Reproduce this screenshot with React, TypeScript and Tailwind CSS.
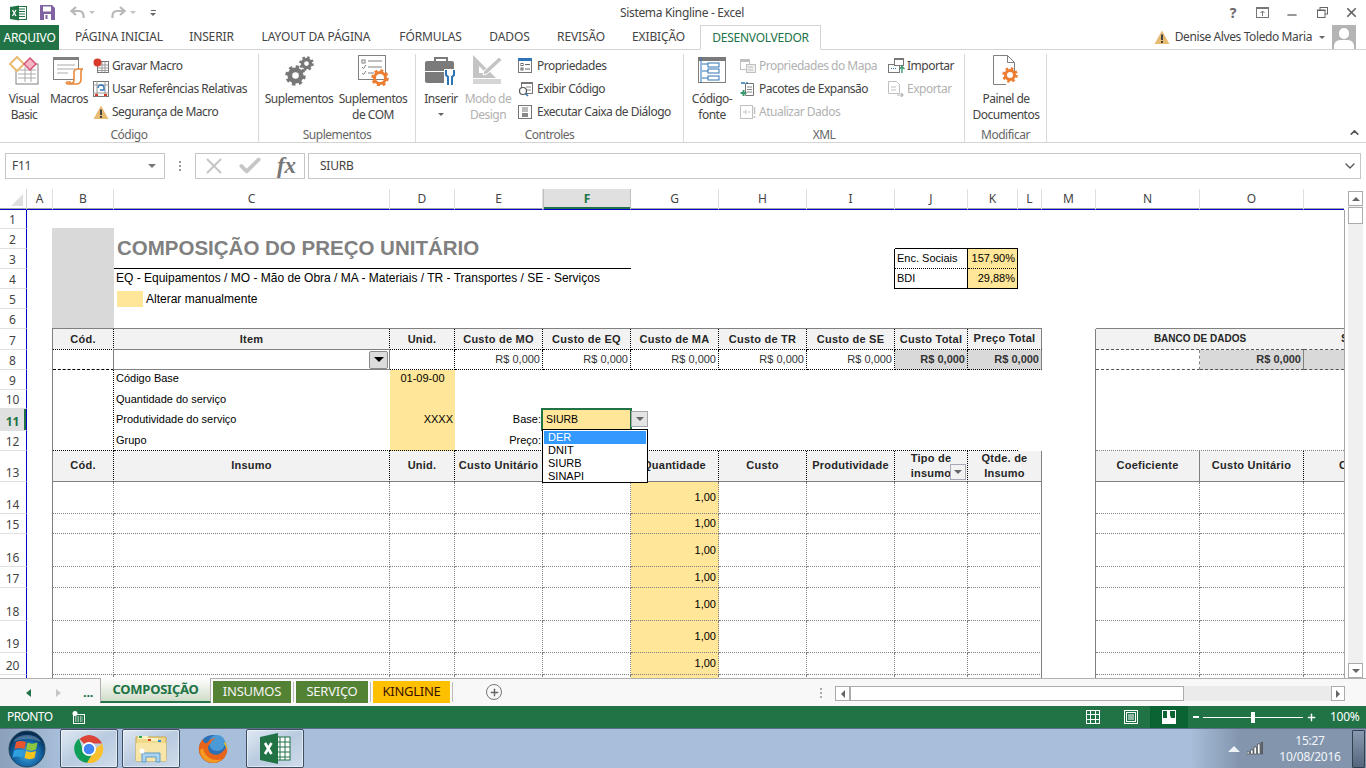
import React from 'react';
import { ChevronDown, ChevronUp, Minus, Plus, X, Check } from 'lucide-react';

const COL: Record<string, string> = { H0: 'col-start-1', A: 'col-start-2', B: 'col-start-3', C: 'col-start-4', D: 'col-start-5', E: 'col-start-6', F: 'col-start-7', G: 'col-start-8', H: 'col-start-9', I: 'col-start-10', J: 'col-start-11', K: 'col-start-12', L: 'col-start-13', M: 'col-start-14', N: 'col-start-15', O: 'col-start-16', P: 'col-start-17', Q: 'col-start-18' };
const ROW = ['row-start-1', 'row-start-2', 'row-start-3', 'row-start-4', 'row-start-5', 'row-start-6', 'row-start-7', 'row-start-8', 'row-start-9', 'row-start-10', 'row-start-11', 'row-start-12', 'row-start-13', 'row-start-14', 'row-start-15', 'row-start-16', 'row-start-17', 'row-start-18', 'row-start-19', 'row-start-20', 'row-start-21', 'row-start-22'];
const CS: Record<number, string> = { 1: '', 2: 'col-span-2', 3: 'col-span-3', 4: 'col-span-4', 6: 'col-span-6', 10: 'col-span-10' };
const RS: Record<number, string> = { 1: '', 2: 'row-span-2', 4: 'row-span-4', 5: 'row-span-5', 15: 'row-span-15', 21: 'row-span-21' };

function Cell({ c, r, cs = 1, rs = 1, className = '', children }: { c: string; r: number; cs?: number; rs?: number; className?: string; children?: React.ReactNode }) {
  return <div className={`${COL[c]} ${ROW[r]} ${CS[cs]} ${RS[rs]} min-w-0 min-h-0 ${className}`}>{children}</div>;
}

const HEAD = 'bg-[#f2f2f2] font-bold flex items-center justify-center text-center whitespace-nowrap text-[11px] tracking-[0.25px] text-[#262626] overflow-hidden';
const DOTK = 'border-r [border-right-style:dotted] border-r-black';
const DOTG = 'border-r [border-right-style:dotted] border-r-[#808080]';
const BDOTK = 'border-b [border-bottom-style:dotted] border-b-black';
const BDOTG = 'border-b [border-bottom-style:dotted] border-b-[#808080]';
const BDASH = 'border-b [border-bottom-style:dashed] border-b-[#555]';

function Gear({ size, color, className = '' }: { size: number; color: string; className?: string }) {
  return (
    <svg width={size} height={size} viewBox="0 0 24 24" className={className}>
      <circle cx="12" cy="12" r="9.4" fill="none" stroke={color} strokeWidth="4.6" strokeDasharray="3.7 3.68" />
      <circle cx="12" cy="12" r="6.5" fill="none" stroke={color} strokeWidth="5.4" />
    </svg>
  );
}

function Warn({ size = 16 }: { size?: number }) {
  return (
    <svg width={size} height={size} viewBox="0 0 16 16">
      <path d="M8 1.5 15.5 15H.5z" fill="#e8bb73" />
      <rect x="7" y="5.5" width="2" height="5.5" fill="#444" />
      <rect x="7" y="12" width="2" height="2" fill="#444" />
    </svg>
  );
}

function Large({ w, lines, disabled, icon, caret }: { w: string; lines: string[]; disabled?: boolean; icon: React.ReactNode; caret?: boolean }) {
  return (
    <div className={`${w} shrink-0 flex flex-col items-center`}>
      <div className="h-[32px] flex items-end justify-center">{icon}</div>
      <div className={`mt-[5px] text-[12px] leading-[16px] text-center whitespace-nowrap ${disabled ? 'text-[#b1b1b1]' : 'text-[#444]'}`}>
        {lines.map((l) => <div key={l}>{l}</div>)}
        {caret && <div className="flex justify-center pt-[6px]"><div className="w-0 h-0 border-x-[3px] border-x-transparent border-t-[3px] border-t-[#666]" /></div>}
      </div>
    </div>
  );
}

function Small({ icon, label, disabled }: { icon: React.ReactNode; label: string; disabled?: boolean }) {
  return (
    <div className="h-[23px] flex items-center whitespace-nowrap">
      <div className="w-[19px] h-[18px] flex items-center shrink-0">{icon}</div>
      <span className={`text-[12px] ${disabled ? 'text-[#b1b1b1]' : 'text-[#444]'}`}>{label}</span>
    </div>
  );
}

function Group({ w, label, sep = true, children }: { w: string; label: string; sep?: boolean; children: React.ReactNode }) {
  return (
    <div className={`${w} shrink-0 h-[88px] flex flex-col ${sep ? 'border-r border-r-[#d9d9d9]' : ''}`}>
      <div className="flex-1 flex min-h-0">{children}</div>
      <div className="h-[14px] text-[12px] leading-[14px] text-center text-[#666]">{label}</div>
    </div>
  );
}

function Ribbon() {
  return (
    <div className="h-[93px] bg-white border-b border-b-[#d4d4d4] flex pt-[4px] tracking-[-0.5px]">
      <Group w="w-[259px]" label="Código">
        <div className="w-[2px]" />
        <Large w="w-[44px]" lines={['Visual', 'Basic']} icon={
          <svg width="32" height="30" viewBox="0 0 32 30">
            <rect x="8" y="8" width="22" height="20" fill="#fff" stroke="#808080" />
            <path d="M10 14h18M10 18h18M10 22h18M17 11v15M23 11v15" stroke="#aaa" />
            <path d="M9 1 16 8l-7 7-7-7z" fill="#fff" stroke="#e8bb73" strokeWidth="2" />
            <path d="M22 2l6 6-6 6-6-6z" fill="#f4b6c4" stroke="#d4567a" strokeWidth="1.5" />
          </svg>
        } />
        <Large w="w-[46px]" lines={['Macros']} icon={
          <svg width="34" height="30" viewBox="0 0 34 30">
            <rect x="1.5" y="1.5" width="25" height="22" fill="#fff" stroke="#808080" />
            <rect x="1" y="1" width="26" height="3" fill="#808080" />
            <path d="M5 9h18M5 13h18M5 17h11" stroke="#aaa" />
            <path d="M18 27c3 1 4-1 4-3V16c0-2 2-3 4-3h5c-2 0-2 2-2 3v8c0 2-2 4-4 4h-9c-2 0-2-2-1-2h3z" fill="#fff" stroke="#e8883a" strokeWidth="1.6" />
          </svg>
        } />
        <div className="ml-[1px] flex flex-col">
          <Small label="Gravar Macro" icon={<svg width="16" height="16" viewBox="0 0 16 16"><rect x="4.5" y="3.5" width="11" height="11" fill="#fff" stroke="#777" /><path d="M5 7h10M5 10h10M5 12.500h10M9 4v10M12 4v10" stroke="#999" /><circle cx="4.500" cy="4.500" r="4" fill="#d83b2a" /></svg>} />
          <Small label="Usar Referências Relativas" icon={<svg width="16" height="16" viewBox="0 0 16 16"><rect x="0.500" y="0.500" width="15" height="15" fill="#fff" stroke="#777" /><path d="M4 0v16M12 0v16M0 4h16M0 12h16" stroke="#999" /><path d="M5 7a3 3 0 0 1 6 0v2H7" fill="none" stroke="#2f75b5" strokeWidth="1.300" /><rect x="2" y="13" width="3" height="2" fill="#d83b2a" /><rect x="11" y="13" width="3" height="2" fill="#d83b2a" /></svg>} />
          <Small label="Segurança de Macro" icon={<Warn />} />
        </div>
      </Group>
      <Group w="w-[157px]" label="Suplementos">
        <div className="w-[3px]" />
        <Large w="w-[74px]" lines={['Suplementos']} icon={
          <div className="relative w-[28px] h-[30px]">
            <Gear size={21} color="#777" className="absolute left-0 bottom-0" />
            <Gear size={15} color="#777" className="absolute right-[-1px] top-0" />
          </div>
        } />
        <Large w="w-[74px]" lines={['Suplementos', 'de COM']} icon={
          <svg width="32" height="32" viewBox="0 0 32 32">
            <rect x="1.500" y="1.500" width="27" height="24" fill="#fff" stroke="#808080" />
            <rect x="5" y="6" width="3" height="3" fill="none" stroke="#808080" />
            <path d="M11 7h14M11 13h14M11 19h6" stroke="#808080" />
            <path d="M5 13l1.500 1.500L9 11M5 19l1.500 1.500L9 17" fill="none" stroke="#808080" />
            <circle cx="23" cy="24" r="5.500" fill="none" stroke="#ed7d31" strokeWidth="3" />
            <circle cx="23" cy="24" r="7.500" fill="none" stroke="#ed7d31" strokeWidth="2.500" strokeDasharray="3 2.900" />
          </svg>
        } />
      </Group>
      <Group w="w-[268px]" label="Controles">
        <div className="w-[2px]" />
        <Large w="w-[46px]" lines={['Inserir']} caret icon={
          <svg width="32" height="30" viewBox="0 0 32 30">
            <path d="M10 5V2h12v3" fill="none" stroke="#7a7a7a" strokeWidth="2" />
            <rect x="0" y="5" width="29" height="22" rx="2" fill="#7a7a7a" />
            <rect x="0" y="15" width="22" height="1" fill="#fff" />
            <rect x="19" y="13" width="12" height="17" fill="#fff" />
            <path d="M21 14v5l2 2v8M29 14v5l-2 2v8" fill="none" stroke="#2f75b5" strokeWidth="2" />
          </svg>
        } />
        <Large w="w-[48px]" lines={['Modo de', 'Design']} disabled icon={
          <svg width="32" height="32" viewBox="0 0 32 32">
            <path d="M1 1 1 24 24 24z" fill="#c4c4c4" />
            <path d="M7 12 7 19 14 19z" fill="#fff" />
            <path d="M12 17 27 3l3 3-15 14-4 1z" fill="#c4c4c4" stroke="#fff" />
            <rect x="1" y="25" width="28" height="5" fill="#d5d5d5" />
          </svg>
        } />
        <div className="ml-[6px] flex flex-col">
          <Small label="Propriedades" icon={<svg width="15" height="16" viewBox="0 0 15 16"><rect x="0.500" y="1.500" width="13" height="13" fill="#fff" stroke="#777" /><rect y="0" width="14" height="3" fill="#2f75b5" /><rect x="3" y="5.500" width="2" height="2" fill="none" stroke="#666" /><rect x="3" y="10" width="2" height="2" fill="none" stroke="#666" /><path d="M7 6.500h5M7 11h5" stroke="#666" /></svg>} />
          <Small label="Exibir Código" icon={<svg width="16" height="16" viewBox="0 0 16 16"><rect x="3.500" y="1.500" width="11" height="11" fill="#fff" stroke="#777" /><rect x="3" y="1" width="12" height="2" fill="#777" /><path d="M8 6h5M9 9h4" stroke="#888" /><circle cx="5" cy="10" r="3.500" fill="#fff" stroke="#555" strokeWidth="1.200" /><path d="M7.500 12.500 10 15" stroke="#2f75b5" strokeWidth="1.600" /></svg>} />
          <Small label="Executar Caixa de Diálogo" icon={<svg width="15" height="16" viewBox="0 0 15 16"><rect x="0.500" y="1.500" width="13" height="13" fill="#fff" stroke="#777" /><rect x="4" y="3" width="6" height="5" fill="#bbb" /><rect x="4" y="9" width="6" height="4" fill="#888" /></svg>} />
        </div>
      </Group>
      <Group w="w-[281px]" label="XML">
        <div className="w-[3px]" />
        <Large w="w-[50px]" lines={['Código-', 'fonte']} icon={
          <svg width="30" height="30" viewBox="0 0 30 30">
            <rect x="1.500" y="1.500" width="27" height="25" fill="#fff" stroke="#808080" />
            <rect x="1" y="1" width="28" height="4" fill="#7a7a7a" />
            <path d="M4 1v26M5 8h6M5 15h6M5 22h6" stroke="#2f75b5" />
            <rect x="11" y="7" width="11" height="4" fill="#fff" stroke="#2f75b5" />
            <rect x="11" y="13" width="11" height="4" fill="#fff" stroke="#2f75b5" />
            <rect x="11" y="20" width="11" height="4" fill="#fff" stroke="#2f75b5" />
          </svg>
        } />
        <div className="ml-[3px] w-[148px] flex flex-col">
          <Small disabled label="Propriedades do Mapa" icon={<svg width="16" height="16" viewBox="0 0 16 16"><rect x="0.500" y="1.500" width="9" height="10" fill="#fff" stroke="#c0c0c0" /><rect y="1" width="10" height="3" fill="#c0c0c0" /><rect x="6.500" y="6.500" width="9" height="8" fill="#eee" stroke="#c0c0c0" /><path d="M8 9h5M8 12h5" stroke="#c0c0c0" /></svg>} />
          <Small label="Pacotes de Expansão" icon={<svg width="16" height="16" viewBox="0 0 16 16"><path d="M5.500 2.500h8v12h-8z" fill="#fff" stroke="#777" /><path d="M7 6h5M7 8.500h5M7 11h5" stroke="#888" /><path d="M1 2h2M4 1v2M6 2h2" stroke="#2f75b5" strokeWidth="1.500" /><path d="M3.500 9v6M.5 12h6" stroke="#3a9a6c" strokeWidth="2" /></svg>} />
          <Small disabled label="Atualizar Dados" icon={<svg width="16" height="16" viewBox="0 0 16 16"><rect x="0.500" y="1.500" width="12" height="13" fill="#fff" stroke="#c0c0c0" /><path d="M3 8h2M6 6v4M8 8h2" stroke="#bbb" /><path d="M14.500 3v7M14.500 12v2" stroke="#c0c0c0" strokeWidth="1.500" /></svg>} />
        </div>
        <div className="flex flex-col">
          <Small label="Importar" icon={<svg width="17" height="16" viewBox="0 0 17 16"><rect x="0.500" y="6.500" width="11" height="8" fill="#fff" stroke="#777" /><rect x="6.500" y="0.500" width="9" height="7" fill="#fff" stroke="#777" /><rect x="6" y="0" width="10" height="2" fill="#777" /><path d="M3 10.500h5" stroke="#2f75b5" strokeDasharray="1 1" /><path d="M14 15V9M11.500 11 14 8.500l2.500 2.500" fill="none" stroke="#3a9a6c" strokeWidth="1.400" /></svg>} />
          <Small disabled label="Exportar" icon={<svg width="17" height="16" viewBox="0 0 17 16"><path d="M.5.500h8l3 3v9H.5z" fill="#fff" stroke="#c0c0c0" /><path d="M3 6h5M3 9h5" stroke="#c0c0c0" /><path d="M9 14h6M13 12l2 2-2 2" fill="none" stroke="#b5b5b5" strokeWidth="1.200" /></svg>} />
        </div>
      </Group>
      <Group w="w-[82px]" label="Modificar">
        <div className="w-[6px]" />
        <Large w="w-[70px]" lines={['Painel de', 'Documentos']} icon={
          <svg width="28" height="32" viewBox="0 0 28 32">
            <path d="M1.500 1.500h14l7 7v22h-21z" fill="#fff" stroke="#808080" />
            <path d="M15.500 1.500v7h7" fill="none" stroke="#808080" />
            <rect x="14" y="20" width="14" height="12" fill="#fff" />
            <circle cx="18" cy="21" r="4.500" fill="none" stroke="#ed7d31" strokeWidth="3" />
            <circle cx="18" cy="21" r="6.500" fill="none" stroke="#ed7d31" strokeWidth="2.500" strokeDasharray="2.600 2.500" />
          </svg>
        } />
      </Group>
      <div className="flex-1 flex justify-end items-end pb-[3px] pr-[5px]">
        <ChevronUp size={13} strokeWidth={3} className="text-[#555]" />
      </div>
    </div>
  );
}

function TitleBar() {
  return (
    <div className="h-[25px] flex items-center bg-white">
      <div className="w-[613px] flex items-center shrink-0 relative h-full">
        <svg width="17" height="16" viewBox="0 0 17 16" className="ml-[10px]">
          <rect x="7" y="1.500" width="9.500" height="13" fill="#fff" stroke="#217346" />
          <path d="M9 4h6M9 6.500h6M9 9h6M9 11.500h6" stroke="#217346" />
          <path d="M0 2 9 .5v15L0 14z" fill="#217346" />
          <path d="M2.500 5 6 11M6 5l-3.500 6" stroke="#fff" strokeWidth="1.300" />
        </svg>
        <svg width="15" height="15" viewBox="0 0 15 15" className="ml-[13px]">
          <path d="M0 0h12l3 3v12H0z" fill="#8064a2" />
          <rect x="3" y="1.500" width="8" height="5" fill="#fff" />
          <rect x="4" y="9" width="7" height="6" fill="#fff" />
          <rect x="5.500" y="10" width="2" height="4" fill="#8064a2" />
        </svg>
        <svg width="15" height="13" viewBox="0 0 15 13" className="ml-[15px]"><path d="M6 1 1.500 5 6 9M2 5h7c3 0 5 2 4.500 7" fill="none" stroke="#b8b8b8" strokeWidth="2.200" /></svg>
        <div className="ml-[4px] w-0 h-0 border-x-[3px] border-x-transparent border-t-[3px] border-t-[#c0c0c0]" />
        <svg width="15" height="13" viewBox="0 0 15 13" className="ml-[16px]"><path d="M9 1l4.500 4L9 9M13 5H6C3 5 1 7 1.500 12" fill="none" stroke="#b8b8b8" strokeWidth="2.200" /></svg>
        <div className="ml-[4px] w-0 h-0 border-x-[3px] border-x-transparent border-t-[3px] border-t-[#c0c0c0]" />
        <div className="ml-[14px] flex flex-col items-center gap-[2px]">
          <div className="w-[5px] h-[1px] bg-[#666]" />
          <div className="w-0 h-0 border-x-[3px] border-x-transparent border-t-[3px] border-t-[#666]" />
        </div>
      </div>
      <div className="w-[138px] text-center text-[12px] text-[#444] whitespace-nowrap tracking-[-0.32px]">Sistema Kingline - Excel</div>
      <div className="flex-1" />
      <div className="flex items-center text-[#666] pr-[7px]">
        <span className="w-[14px] text-center text-[14px] font-bold leading-none">?</span>
        <svg width="14" height="12" viewBox="0 0 14 12" className="ml-[16px]"><rect x=".5" y=".5" width="12" height="10" fill="none" stroke="#777" /><path d="M0 1h13" stroke="#777" strokeWidth="2" /><path d="M6.500 9V4M4.500 6l2-2 2 2" fill="none" stroke="#777" /></svg>
        <Minus size={14} strokeWidth={2.500} className="ml-[15px] mt-[4px] text-[#777]" />
        <svg width="11" height="11" viewBox="0 0 11 11" className="ml-[18px]"><rect x="3" y=".5" width="7.500" height="6.500" fill="none" stroke="#666" /><rect x=".5" y="3" width="7.500" height="7.500" fill="#fff" stroke="#666" /><path d="M0 3.500h8.500" stroke="#666" /></svg>
        <X size={15} strokeWidth={2.800} className="ml-[16px] text-[#666]" />
      </div>
    </div>
  );
}

function Tabs() {
  const items: [string, string, string][] = [
    ['PÁGINA INICIAL', 'ml-[17px]', 'w-[86px]'],
    ['INSERIR', 'ml-[29px]', 'w-[41px]'],
    ['LAYOUT DA PÁGINA', 'ml-[29px]', 'w-[110px]'],
    ['FÓRMULAS', 'ml-[29px]', 'w-[61px]'],
    ['DADOS', 'ml-[29px]', 'w-[39px]'],
    ['REVISÃO', 'ml-[29px]', 'w-[46px]'],
    ['EXIBIÇÃO', 'ml-[29px]', 'w-[51px]'],
  ];
  return (
    <div className="h-[25px] flex bg-white border-b border-b-[#d4d4d4]">
      <div className="w-[59px] h-[25px] bg-[#217346] text-white text-[12px] flex items-center justify-center">ARQUIVO</div>
      {items.map(([t, ml, w]) => (
        <div key={t} className={`${ml} ${w} flex items-center justify-center whitespace-nowrap text-[12px] text-[#444] tracking-[-0.12px]`}>{t}</div>
      ))}
      <div className="ml-[16px] w-[121px] h-[25px] bg-white border border-[#d4d4d4] border-b-white flex items-center justify-center text-[12px] text-[#217346]">DESENVOLVEDOR</div>
      <div className="flex-1" />
      <div className="flex items-center h-[24px] pr-[10px]">
        <Warn />
        <span className="ml-[5px] text-[12px] text-[#444] whitespace-nowrap tracking-[-0.4px]">Denise Alves Toledo Maria</span>
        <div className="ml-[7px] w-0 h-0 border-x-[3px] border-x-transparent border-t-[3px] border-t-[#666]" />
        <div className="ml-[7px] w-[24px] h-[24px] bg-[#b4b4b4] overflow-hidden relative">
          <div className="absolute left-[7px] top-[3px] w-[10px] h-[11px] rounded-full bg-white" />
          <div className="absolute left-[2px] top-[15px] w-[20px] h-[14px] rounded-t-[6px] bg-white" />
        </div>
      </div>
    </div>
  );
}

function FormulaBar() {
  return (
    <div className="h-[46px] bg-white flex pt-[10px] pl-[5px] pr-[5px]">
      <div className="w-[160px] h-[26px] border border-[#c6c6c6] flex items-center justify-between px-[6px] text-[12px] text-[#444]">
        <span>F11</span>
        <div className="mr-[2px] w-0 h-0 border-x-[4px] border-x-transparent border-t-[4px] border-t-[#777]" />
      </div>
      <div className="w-[30px] h-[26px] flex flex-col items-center justify-center gap-[2px]">
        <div className="w-[2px] h-[2px] bg-[#999]" /><div className="w-[2px] h-[2px] bg-[#999]" /><div className="w-[2px] h-[2px] bg-[#999]" />
      </div>
      <div className="w-[110px] h-[26px] border border-[#c6c6c6] flex items-center pl-[5px] text-[#c6c6c6]">
        <X size={26} strokeWidth={1.800} className="shrink-0" />
        <Check size={26} strokeWidth={3.500} className="shrink-0 ml-[10px]" />
        <span className="ml-[14px] font-['Liberation_Serif',serif] italic font-bold text-[23px] leading-none text-[#777] -mt-[2px]">fx</span>
      </div>
      <div className="ml-[3px] flex-1 h-[26px] border border-[#c6c6c6] flex items-center justify-between pl-[11px] pr-[2px] text-[12px] text-[#444]">
        <span>SIURB</span>
        <ChevronDown size={16} strokeWidth={2} className="text-[#555]" />
      </div>
    </div>
  );
}

const rowH = ['h', 1, 2, 3, 4, 5, 6, 7, 8, 9, 10, 11, 12, 13, 14, 15, 16, 17, 18, 19, 20, 21];
const letters = ['A', 'B', 'C', 'D', 'E', 'F', 'G', 'H', 'I', 'J', 'K', 'L', 'M', 'N', 'O'];
const bodyRows = [14, 15, 16, 17, 18, 19, 20, 21];

function R8({ c, v, grey, cs = 1, className = '' }: { c: string; v: string; grey?: boolean; cs?: number; className?: string }) {
  return (
    <Cell c={c} r={8} cs={cs} className={`flex items-center justify-end pr-[2px] whitespace-nowrap ${BDOTK} ${grey ? 'bg-[#d9d9d9] font-bold text-[#333]' : 'text-[#333]'} ${className}`}>{v}</Cell>
  );
}

function Sheet() {
  return (
    <div className="h-[489px] overflow-hidden bg-white relative">
      <div className="grid w-[1345px] grid-cols-[27px_26px_61px_276px_65px_88px_88px_88px_88px_88px_73px_50px_24px_54px_104px_104px_40px_1px] grid-rows-[21px_19px_20px_20px_20px_20px_20px_21px_20px_20px_19px_22px_20px_31px_32px_20px_33px_21px_33px_32px_22px_20px] font-['Liberation_Sans',Arial,sans-serif] text-[11px] leading-[13px] text-black">
        {/* corner */}
        <Cell c="H0" r={0} className="bg-white border-r border-r-[#d4d4d4] border-b border-b-[#0000cc] shadow-[inset_0_-1px_0_#a6a6a6] relative">
          <div className="absolute right-[3px] bottom-[3px] w-0 h-0 border-l-[12px] border-l-transparent border-b-[12px] border-b-[#dfdfdf]" />
        </Cell>
        {letters.map((l) => (
          <Cell key={l} c={l} r={0} className={`flex items-center justify-center pb-[1px] font-['Noto_Sans',sans-serif] text-[12px] border-b border-b-[#0000cc] ${l === 'F' ? 'bg-[#e0e0e0] border-x border-x-[#c0c0c0] shadow-[inset_0_-2px_0_#217346] text-[#217346] font-bold' : 'bg-white shadow-[inset_0_-1px_0_#a6a6a6] text-[#444] border-r border-r-[#e0e0e0]'}`}>{l}</Cell>
        ))}
        <Cell c="P" r={0} className="bg-white border-b border-b-[#0000cc] shadow-[inset_0_-1px_0_#a6a6a6]" />
        {rowH.slice(1).map((n, i) => (
          <Cell key={n} c="H0" r={i + 1} className={`flex items-end justify-center pb-[1px] pr-[1px] font-['Noto_Sans',sans-serif] text-[12px] leading-[15px] border-b border-b-[#e0e0e0] border-r border-r-[#0000cc] ${n === 11 ? 'bg-[#e0e0e0] text-[#217346] font-bold shadow-[inset_-2px_0_0_#217346]' : 'bg-white text-[#444]'}`}>{n === 21 ? null : n}</Cell>
        ))}
        <Cell c="Q" r={1} rs={21} className="bg-[#a6a6a6]" />

        {/* header block */}
        <Cell c="B" r={2} rs={5} className="bg-[#d9d9d9] -ml-px -mt-px border-b border-b-[#808080]" />
        <Cell c="C" r={2} cs={4} rs={2} className="flex items-center pl-[3px] whitespace-nowrap border-b border-b-black text-[20.5px] leading-none font-bold text-[#808080]">COMPOSIÇÃO DO PREÇO UNITÁRIO</Cell>
        <Cell c="C" r={4} cs={4} className="flex items-center pl-[2px] pb-[1px] whitespace-nowrap text-[12px]">EQ - Equipamentos / MO - Mão de Obra / MA - Materiais / TR - Transportes / SE - Serviços</Cell>
        <Cell c="C" r={5} cs={4} className="flex items-center pl-[3px] whitespace-nowrap text-[12px]">
          <div className="w-[26px] h-[16px] bg-[#ffe699] mr-[3px]" />Alterar manualmente
        </Cell>

        {/* Enc sociais */}
        <Cell c="I" r={3} rs={2} className="border-r border-r-black" />
        <Cell c="J" r={2} cs={2} className="border-b border-b-black" />
        <Cell c="J" r={3} className={`flex items-center pl-[2px] whitespace-nowrap border-r border-r-black ${BDOTK}`}>Enc. Sociais</Cell>
        <Cell c="K" r={3} className={`flex items-center justify-end pr-[2px] bg-[#ffe699] border-r border-r-black ${BDOTK}`}>157,90%</Cell>
        <Cell c="J" r={4} className="flex items-center pl-[2px] border-r border-r-black border-b border-b-black">BDI</Cell>
        <Cell c="K" r={4} className="flex items-center justify-end pr-[2px] bg-[#ffe699] border-r border-r-black border-b border-b-black">29,88%</Cell>

        {/* table outer top */}
        <Cell c="C" r={6} cs={10} className="border-b border-b-[#808080]" />
        <Cell c="N" r={6} cs={3} className="border-b border-b-[#808080]" />
        <Cell c="A" r={7} rs={15} className="border-r border-r-[#808080]" />
        <Cell c="M" r={7} rs={15} className="border-r border-r-[#808080]" />

        {/* row 7 */}
        {([['B', 'Cód.'], ['C', 'Item'], ['D', 'Unid.'], ['E', 'Custo de MO'], ['F', 'Custo de EQ'], ['G', 'Custo de MA'], ['H', 'Custo de TR'], ['I', 'Custo de SE'], ['J', 'Custo Total']] as [string, string][]).map(([c, t]) => (
          <Cell key={c} c={c} r={7} className={`${HEAD} ${DOTK} ${BDOTK}`}>{t}</Cell>
        ))}
        <Cell c="K" r={7} cs={2} className={`${HEAD} border-r border-r-[#808080] ${BDOTK} pb-[2px]`}>Preço Total</Cell>
        <Cell c="N" r={7} cs={2} className={`${HEAD} !text-[10px] !tracking-normal ${BDASH} pb-[2px]`}>BANCO DE DADOS</Cell>
        <Cell c="P" r={7} className={`${HEAD} !justify-start pl-[37px] ${BDASH} pb-[2px]`}>S</Cell>

        {/* row 8 */}
        <Cell c="B" r={8} className={`${DOTK} ${BDASH} !border-b-black`} />
        <Cell c="C" r={8} className="border border-[#808080] -mt-px -ml-px flex items-center justify-end pr-[1px]">
          <div className="w-[19px] h-[18px] bg-[#dcdcdc] border border-[#8a8a8a] rounded-[2px] flex items-center justify-center">
            <div className="w-0 h-0 border-x-[5px] border-x-transparent border-t-[5px] border-t-black" />
          </div>
        </Cell>
        <Cell c="D" r={8} className={`${DOTK} ${BDOTK}`} />
        <R8 c="E" v="R$ 0,000" className={DOTK} />
        <R8 c="F" v="R$ 0,000" className={DOTK} />
        <R8 c="G" v="R$ 0,000" className={DOTK} />
        <R8 c="H" v="R$ 0,000" className={DOTK} />
        <R8 c="I" v="R$ 0,000" className={DOTK} />
        <R8 c="J" v="R$ 0,000" grey className={DOTK} />
        <R8 c="K" cs={2} v="R$ 0,000" grey className="border-r border-r-[#808080]" />
        <Cell c="N" r={8} className={`border-r [border-right-style:dashed] border-r-[#808080] ${BDASH}`} />
        <Cell c="O" r={8} className={`bg-[#d9d9d9] font-bold text-[#333] flex items-center justify-end pr-[2px] border-r border-r-[#808080] ${BDASH}`}>R$ 0,000</Cell>
        <Cell c="P" r={8} className={`bg-[#d9d9d9] ${BDASH}`} />

        {/* rows 9-12 */}
        <Cell c="B" r={9} rs={4} className={`${DOTK} ${BDOTK}`} />
        <Cell c="C" r={9} className="flex items-center pl-[2px] pb-[3px] whitespace-nowrap">Código Base</Cell>
        <Cell c="C" r={10} className="flex items-center pl-[2px] pb-[1px] whitespace-nowrap">Quantidade do serviço</Cell>
        <Cell c="C" r={11} className="flex items-center pl-[2px] pb-[2px] whitespace-nowrap">Produtividade do serviço</Cell>
        <Cell c="C" r={12} className={`flex items-center pl-[2px] whitespace-nowrap ${BDOTK}`}>Grupo</Cell>
        <Cell c="D" r={9} className="bg-[#ffe699] flex items-center justify-center pb-[3px]">01-09-00</Cell>
        <Cell c="D" r={10} className="bg-[#ffe699]" />
        <Cell c="D" r={11} className="bg-[#ffe699] flex items-center justify-end pr-[2px] pb-[2px]">XXXX</Cell>
        <Cell c="D" r={12} className={`bg-[#ffe699] ${BDOTK}`} />
        <Cell c="E" r={11} className="flex items-center justify-end pr-[2px] pb-[2px]">Base:</Cell>
        <Cell c="E" r={12} className={`flex items-center justify-end pr-[2px] ${BDOTK}`}>Preço:</Cell>
        <Cell c="F" r={11} className="bg-[#ffe699] border-2 border-[#217346] -ml-[2px] -mr-px -mt-px flex items-center pl-[3px] pb-[1px] text-[10.5px]">SIURB</Cell>
        <Cell c="F" r={12} cs={6} className={BDOTK} />
        <Cell c="N" r={12} cs={3} className={BDOTG} />

        {/* row 13 */}
        {([['B', 'Cód.'], ['C', 'Insumo'], ['D', 'Unid.'], ['E', 'Custo Unitário'], ['F', ''], ['G', 'Quantidade'], ['H', 'Custo'], ['I', 'Produtividade']] as [string, string][]).map(([c, t]) => (
          <Cell key={c} c={c} r={13} className={`${HEAD} ${DOTK} border-b border-b-[#808080] pb-[1px]`}>{t}</Cell>
        ))}
        <Cell c="J" r={13} className={`${HEAD} ${DOTK} border-b border-b-[#808080] !whitespace-normal !leading-[15px] relative`}>
          <span>Tipo de<br />insumo</span>
          <div className="absolute right-[1px] bottom-[1px] w-[16px] h-[16px] bg-[#f2f2f2] border border-[#a8a8b8] flex items-center justify-center">
            <div className="w-0 h-0 border-x-[4px] border-x-transparent border-t-[4px] border-t-[#666]" />
          </div>
        </Cell>
        <Cell c="K" r={13} cs={2} className={`${HEAD} border-r border-r-[#808080] border-b border-b-[#808080] !leading-[15px]`}><span>Qtde. de<br />Insumo</span></Cell>
        <Cell c="N" r={13} className={`${HEAD} border-r border-r-[#808080] border-b border-b-[#808080] pb-[1px]`}>Coeficiente</Cell>
        <Cell c="O" r={13} className={`${HEAD} ${DOTK} border-b border-b-[#808080] pb-[1px]`}>Custo Unitário</Cell>
        <Cell c="P" r={13} className={`${HEAD} !justify-start pl-[35px] border-b border-b-[#808080] pb-[1px]`}>C</Cell>

        {/* body */}
        {bodyRows.map((r) => (
          <React.Fragment key={r}>
            {['B', 'C', 'D', 'E', 'F', 'H', 'I', 'J'].map((c) => (
              <Cell key={c} c={c} r={r} className={`${DOTG} ${BDOTG}`} />
            ))}
            <Cell c="G" r={r} className={`bg-[#ffe699] ${DOTG} ${BDOTG} flex items-center justify-end pr-[2px]`}>{r === 21 ? null : '1,00'}</Cell>
            <Cell c="K" r={r} cs={2} className={`border-r border-r-[#808080] ${BDOTG}`} />
            <Cell c="N" r={r} className={`${DOTG} ${BDOTG}`} />
            <Cell c="O" r={r} className={`${DOTG} ${BDOTG}`} />
            <Cell c="P" r={r} className={BDOTG} />
          </React.Fragment>
        ))}
      </div>

      {/* Validation list, lies over the cells */}
      <div className="absolute left-[631px] top-[222px] w-[17px] h-[16px] bg-[#e4e4e4] border border-[#a8a8a8] flex items-center justify-center">
        <div className="w-0 h-0 border-x-[4px] border-x-transparent border-t-[4px] border-t-[#666]" />
      </div>
      <div className="absolute left-[542px] top-[240px] w-[106px] h-[54px] bg-white border border-black pt-[1px] font-['Liberation_Sans',Arial,sans-serif] text-[11px] leading-[13px] text-black">
        <div className="mx-[1px] h-[13px] pl-[4px] bg-[#3399ff] text-white">DER</div>
        <div className="pl-[5px]">DNIT</div>
        <div className="pl-[5px]">SIURB</div>
        <div className="pl-[5px]">SINAPI</div>
      </div>

      {/* Vertical scrollbar */}
      <div className="absolute right-0 top-0 bottom-0 w-[21px] bg-white pt-[2px] pl-[3px]">
        <div className="w-[15px] h-full bg-[#f0f0f0] flex flex-col">
          <div className="w-[15px] h-[15px] bg-white border border-[#ababab] flex items-center justify-center">
            <div className="w-0 h-0 border-x-[4px] border-x-transparent border-b-[4px] border-b-[#666]" />
          </div>
          <div className="w-[15px] h-[17px] bg-white border border-[#ababab] mt-[1px]" />
          <div className="flex-1" />
          <div className="w-[15px] h-[15px] bg-white border border-[#ababab] flex items-center justify-center">
            <div className="w-0 h-0 border-x-[4px] border-x-transparent border-t-[4px] border-t-[#666]" />
          </div>
        </div>
      </div>
    </div>
  );
}

function SheetTabs() {
  return (
    <div className="h-[28px] flex bg-[#f8f8f8] border-t border-t-[#b0b0b0] text-[13px]">
      <div className="w-[100px] h-full flex items-center shrink-0">
        <div className="ml-[26px] w-0 h-0 border-y-[4px] border-y-transparent border-r-[5px] border-r-[#217346]" />
        <div className="ml-[25px] w-0 h-0 border-y-[4px] border-y-transparent border-l-[5px] border-l-[#c6c6c6]" />
        <span className="ml-[22px] font-bold text-[#217346] leading-none -mt-[1px]">...</span>
      </div>
      <div className="w-[111px] h-[25px] -mt-px border-x border-x-[#b0b0b0] border-b-2 border-b-[#217346] bg-gradient-to-b from-white to-[#cfdcc8] flex items-center justify-center pt-[1px] font-bold text-[#217346]">COMPOSIÇÃO</div>
      <div className="ml-[2px] mt-[2px] w-[78px] h-[22px] bg-[#548235] text-[#f4f4f4] flex items-center justify-center">INSUMOS</div>
      <div className="ml-[2px] mt-[3px] w-px h-[20px] bg-[#bbb]" />
      <div className="ml-[2px] mt-[2px] w-[72px] h-[22px] bg-[#548235] text-[#f4f4f4] flex items-center justify-center">SERVIÇO</div>
      <div className="ml-[2px] mt-[3px] w-px h-[20px] bg-[#bbb]" />
      <div className="ml-[2px] mt-[2px] w-[77px] h-[22px] bg-[#ffc000] text-[#3b1000] flex items-center justify-center">KINGLINE</div>
      <div className="ml-[2px] mt-[3px] w-px h-[20px] bg-[#bbb]" />
      <div className="ml-[33px] mt-[5px] w-[16px] h-[16px] rounded-full border border-[#777] flex items-center justify-center text-[#666]">
        <Plus size={11} strokeWidth={3} />
      </div>
      <div className="ml-[318px] mt-[9px] flex flex-col gap-[2px] h-[10px]">
        <div className="w-[2px] h-[2px] bg-[#aaa]" /><div className="w-[2px] h-[2px] bg-[#aaa]" /><div className="w-[2px] h-[2px] bg-[#aaa]" />
      </div>
      <div className="ml-[13px] mt-[7px] w-[510px] h-[15px] bg-[#ebebeb] flex">
        <div className="w-[15px] h-[15px] bg-white border border-[#ababab] flex items-center justify-center">
          <div className="w-0 h-0 border-y-[4px] border-y-transparent border-r-[4px] border-r-[#666]" />
        </div>
        <div className="w-[334px] h-[15px] bg-white border border-[#ababab]" />
        <div className="flex-1" />
        <div className="w-[14px] h-[15px] bg-white border border-[#ababab] flex items-center justify-center">
          <div className="w-0 h-0 border-y-[4px] border-y-transparent border-l-[4px] border-l-[#666]" />
        </div>
      </div>
    </div>
  );
}

function StatusBar() {
  return (
    <div className="h-[22px] bg-[#217346] flex items-center text-white text-[12px]">
      <span className="ml-[7px] w-[44px] tracking-[-0.6px]">PRONTO</span>
      <svg width="13" height="13" viewBox="0 0 13 13" className="ml-[21px]"><rect x="1.500" y="3.500" width="11" height="9" fill="none" stroke="#fff" /><path d="M3 6h8M3 8h8M3 10h8" stroke="#fff" strokeDasharray="1.500 1" /><circle cx="3" cy="2.500" r="2.500" fill="#fff" /></svg>
      <div className="flex-1" />
      <svg width="14" height="14" viewBox="0 0 14 14"><rect x=".5" y=".5" width="13" height="13" fill="none" stroke="#fff" /><path d="M4.500 0v14M9.500 0v14M0 4.500h14M0 9.500h14" stroke="#fff" /></svg>
      <svg width="14" height="14" viewBox="0 0 14 14" className="ml-[24px]"><rect x=".5" y=".5" width="13" height="13" fill="none" stroke="#fff" /><rect x="2.500" y="2.500" width="9" height="9" fill="none" stroke="#fff" /><path d="M4 5h6M4 7h6M4 9h6" stroke="#fff" /></svg>
      <div className="ml-[12px] w-[38px] h-[22px] bg-[#0a6332] flex items-center justify-center">
        <svg width="14" height="14" viewBox="0 0 14 14"><path d="M0 0h14v14H0z" fill="#fff" /><path d="M1 1h4v7H1zM6.500 1H13v7H9z" fill="#0a6332" /><path d="M6 0h2v9H6z" fill="#fff" /></svg>
      </div>
      <div className="ml-[5px] w-[6px] h-[2px] bg-white" />
      <div className="ml-[4px] w-[100px] h-[1px] bg-white relative">
        <div className="absolute left-[48px] -top-[5px] w-[4px] h-[11px] bg-white" />
      </div>
      <Plus size={11} strokeWidth={3} className="ml-[3px]" />
      <span className="ml-[13px] mr-[8px] w-[28px] text-right">100%</span>
    </div>
  );
}

function TaskBtn({ framed, className = '', children }: { framed?: boolean; className?: string; children: React.ReactNode }) {
  return (
    <div className={`h-[39px] flex items-center justify-center rounded-[2px] ${framed ? 'border border-[#3f4f63] bg-gradient-to-br from-[#dfe8f2] via-[#b9cbe0] to-[#cfdcea] shadow-[inset_0_0_0_1px_rgba(255,255,255,0.5)]' : ''} ${className}`}>{children}</div>
  );
}

function TaskBar() {
  return (
    <div className="h-[40px] flex items-end bg-[linear-gradient(90deg,#8ba0ba_0px,#a7bfda_60px,#a7bfda_1190px,#8295ad_1240px,#8295ad_100%)] border-t border-t-[#5c6f87] font-['Noto_Sans',sans-serif]">
      <div className="w-[60px] h-[39px] flex items-center pl-[8px] shrink-0">
        <svg width="38" height="38" viewBox="0 0 38 38">
          <defs>
            <radialGradient id="orb" cx="50%" cy="65%" r="60%"><stop offset="0%" stopColor="#3fa3df" /><stop offset="65%" stopColor="#0f5f9e" /><stop offset="100%" stopColor="#062a4e" /></radialGradient>
          </defs>
          <circle cx="19" cy="19" r="18" fill="url(#orb)" stroke="#24485f" />
          <path d="M8 12c3-1.500 6-1.500 10 0l-1.500 7c-3-1.500-6-1.500-10 0z" fill="#e8552f" />
          <path d="M19.500 12.500c3 1.500 6 1.500 10 0l-1.500 7c-3 1.500-7 1.500-10 0z" fill="#8cc63f" />
          <path d="M6 20.500c3-1.500 6-1.500 10 0l-1.500 7c-3-1.500-6-1.500-10 0z" fill="#2f9fe0" />
          <path d="M18 21c3 1.500 6 1.500 10 0l-1.500 7c-3 1.500-7 1.500-10 0z" fill="#f6c21c" />
          <path d="M5 12a15 11 0 0 1 28 0c-8-4-20-4-28 0z" fill="#fff" opacity="0.25" />
        </svg>
      </div>
      <TaskBtn framed className="w-[58px]">
        <svg width="30" height="30" viewBox="0 0 30 30">
          <path d="M15 15 5.500 5A14 14 0 0 1 28 9.500H15z" fill="#db4437" />
          <path d="M5 4.500A14 14 0 0 0 13.500 28.900L20 19H10z" fill="#0f9d58" />
          <path d="M28 9.500A14 14 0 0 1 13 28.900L21 15z" fill="#fbc02d" />
          <circle cx="15" cy="15" r="7" fill="#fff" />
          <circle cx="15" cy="15" r="5.300" fill="#4285f4" />
        </svg>
      </TaskBtn>
      <TaskBtn framed className="ml-[4px] w-[58px]">
        <svg width="32" height="30" viewBox="0 0 32 30">
          <path d="M1 3h30v24H1z" fill="#f1d98a" stroke="#c9a84f" />
          <rect x="3" y="2" width="10" height="3" fill="#fdf2c4" />
          <rect x="4" y="2" width="3" height="2" fill="#2fa84f" />
          <rect x="13" y="4" width="10" height="3" fill="#fdf2c4" />
          <rect x="13" y="5" width="3" height="2" fill="#d8432b" />
          <rect x="23" y="6" width="3" height="2" fill="#2f8ed8" />
          <path d="M1 9h30v18H1z" fill="#f7e6a8" />
          <path d="M7 28V19h18v9h-4v-5H11v5z" fill="#a9d3ee" stroke="#5d9bc7" />
          <circle cx="7" cy="17" r="2.500" fill="#fff" />
        </svg>
      </TaskBtn>
      <TaskBtn className="ml-[3px] w-[60px]">
        <svg width="30" height="30" viewBox="0 0 30 30">
          <circle cx="15" cy="15" r="14" fill="#2f6fb5" />
          <circle cx="19" cy="9" r="8" fill="#4a9ad8" />
          <path d="M15 29A14 14 0 0 1 5 5C5 9 7 10 9 9 12 5 16 4 18 4 14 6 13 8 13 9 10 11 9 14 11 17 13 21 19 22 23 19 26 17 28 14 29 12A14 14 0 0 1 15 29z" fill="#e8641b" />
          <path d="M2 16A13 13 0 0 0 24 25C16 28 7 24 5 14z" fill="#f59a23" />
          <path d="M27 8c2 3 2 6 2 8-1-3-2-5-3-7z" fill="#ffcb00" />
        </svg>
      </TaskBtn>
      <TaskBtn framed className="ml-[3px] w-[58px]">
        <svg width="31" height="31" viewBox="0 0 31 31">
          <rect x="13" y="4" width="17" height="23" fill="#fff" stroke="#217346" />
          <path d="M13 9h17M13 14h17M13 19h17M13 24h17M20 4v23M25 4v23" stroke="#217346" />
          <path d="M0 4 18 0v31L0 27z" fill="#217346" />
          <path d="M5 10l6.500 11M11.500 10 5 21" stroke="#fff" strokeWidth="2.600" />
        </svg>
      </TaskBtn>
      <div className="flex-1" />
      <div className="h-[39px] flex items-center">
        <div className="w-0 h-0 border-x-[6px] border-x-transparent border-b-[6px] border-b-[#eef2f7]" />
        <svg width="16" height="13" viewBox="0 0 16 13" className="ml-[7px]"><path d="M0 12h2.500v-2H0zM3.500 12H6V8H3.500zM7 12h2.500V5H7zM10.500 12H13V2h-2.500z" fill="#fff" stroke="#333" strokeWidth=".6" /><path d="M14 12h1.500V0H14z" fill="#777" stroke="#333" strokeWidth=".5" /></svg>
        <div className="ml-[16px] w-[62px] text-center text-[12px] leading-[16px] text-[#f2f5f9] whitespace-nowrap pt-[1px]">
          <div>15:27</div>
          <div>10/08/2016</div>
        </div>
        <div className="ml-[11px] mr-[1px] w-[13px] h-[38px] bg-gradient-to-b from-[#8a9ab0] to-[#56677d] border border-[#33404f] rounded-[1px]" />
      </div>
    </div>
  );
}

export default function App() {
  return (
    <div className="w-[1366px] h-[768px] overflow-hidden bg-white font-['Noto_Sans',sans-serif] tracking-[-0.25px]">
      <TitleBar />
      <Tabs />
      <Ribbon />
      <FormulaBar />
      <div className="tracking-normal"><Sheet /></div>
      <SheetTabs />
      <StatusBar />
      <TaskBar />
    </div>
  );
}
